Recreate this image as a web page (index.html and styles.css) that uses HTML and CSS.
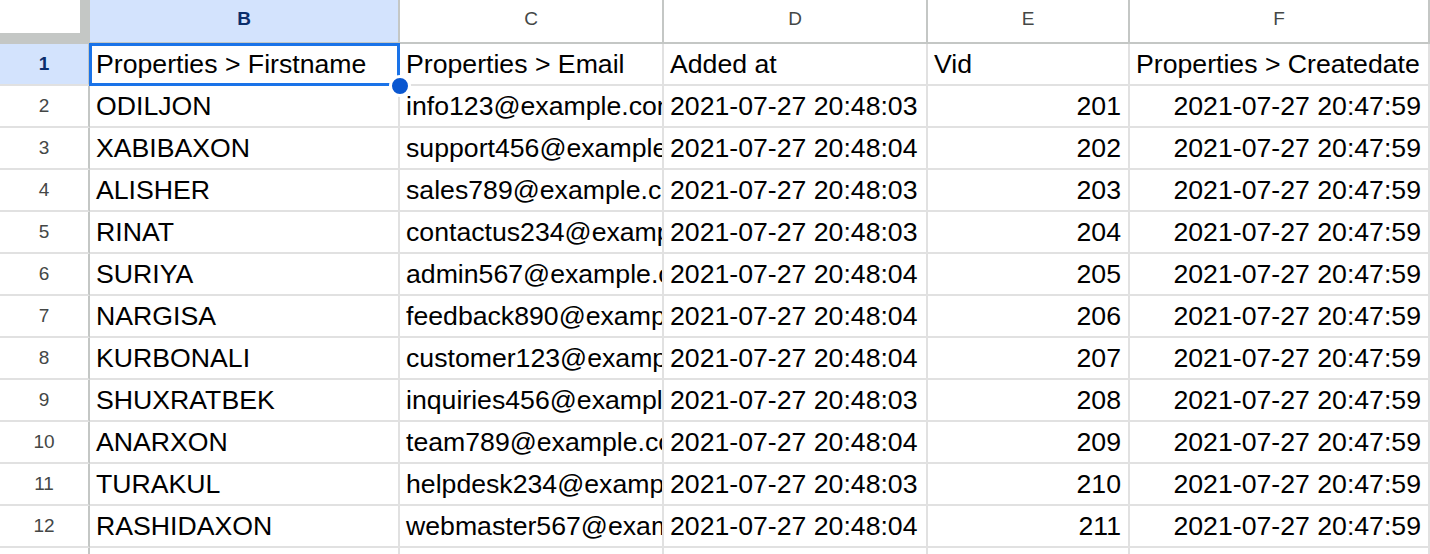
FILE: index.html
```html
<!DOCTYPE html>
<html lang="en">
<head>
<meta charset="utf-8">
<title>Sheet</title>
<link rel="stylesheet" href="styles.css">
</head>
<body>
<div class="sheet">
  <div class="grid">
    <div class="corner"><div class="corner-box"></div></div>
    <div class="colhead sel">B</div>
    <div class="colhead">C</div>
    <div class="colhead">D</div>
    <div class="colhead">E</div>
    <div class="colhead">F</div>

    <div class="rowhead sel">1</div>
    <div class="cell">Properties &gt; Firstname</div>
    <div class="cell">Properties &gt; Email</div>
    <div class="cell">Added at</div>
    <div class="cell">Vid</div>
    <div class="cell">Properties &gt; Createdate</div>

    <div class="rowhead">2</div>
    <div class="cell">ODILJON</div>
    <div class="cell">info123@example.com</div>
    <div class="cell">2021-07-27 20:48:03</div>
    <div class="cell num">201</div>
    <div class="cell num">2021-07-27 20:47:59</div>

    <div class="rowhead">3</div>
    <div class="cell">XABIBAXON</div>
    <div class="cell">support456@example.com</div>
    <div class="cell">2021-07-27 20:48:04</div>
    <div class="cell num">202</div>
    <div class="cell num">2021-07-27 20:47:59</div>

    <div class="rowhead">4</div>
    <div class="cell">ALISHER</div>
    <div class="cell">sales789@example.com</div>
    <div class="cell">2021-07-27 20:48:03</div>
    <div class="cell num">203</div>
    <div class="cell num">2021-07-27 20:47:59</div>

    <div class="rowhead">5</div>
    <div class="cell">RINAT</div>
    <div class="cell">contactus234@example.com</div>
    <div class="cell">2021-07-27 20:48:03</div>
    <div class="cell num">204</div>
    <div class="cell num">2021-07-27 20:47:59</div>

    <div class="rowhead">6</div>
    <div class="cell">SURIYA</div>
    <div class="cell">admin567@example.com</div>
    <div class="cell">2021-07-27 20:48:04</div>
    <div class="cell num">205</div>
    <div class="cell num">2021-07-27 20:47:59</div>

    <div class="rowhead">7</div>
    <div class="cell">NARGISA</div>
    <div class="cell">feedback890@example.com</div>
    <div class="cell">2021-07-27 20:48:04</div>
    <div class="cell num">206</div>
    <div class="cell num">2021-07-27 20:47:59</div>

    <div class="rowhead">8</div>
    <div class="cell">KURBONALI</div>
    <div class="cell">customer123@example.com</div>
    <div class="cell">2021-07-27 20:48:04</div>
    <div class="cell num">207</div>
    <div class="cell num">2021-07-27 20:47:59</div>

    <div class="rowhead">9</div>
    <div class="cell">SHUXRATBEK</div>
    <div class="cell">inquiries456@example.com</div>
    <div class="cell">2021-07-27 20:48:03</div>
    <div class="cell num">208</div>
    <div class="cell num">2021-07-27 20:47:59</div>

    <div class="rowhead">10</div>
    <div class="cell">ANARXON</div>
    <div class="cell">team789@example.com</div>
    <div class="cell">2021-07-27 20:48:04</div>
    <div class="cell num">209</div>
    <div class="cell num">2021-07-27 20:47:59</div>

    <div class="rowhead">11</div>
    <div class="cell">TURAKUL</div>
    <div class="cell">helpdesk234@example.com</div>
    <div class="cell">2021-07-27 20:48:03</div>
    <div class="cell num">210</div>
    <div class="cell num">2021-07-27 20:47:59</div>

    <div class="rowhead">12</div>
    <div class="cell">RASHIDAXON</div>
    <div class="cell">webmaster567@example.com</div>
    <div class="cell">2021-07-27 20:48:04</div>
    <div class="cell num">211</div>
    <div class="cell num">2021-07-27 20:47:59</div>

    <div class="rowhead">13</div>
    <div class="cell"></div>
    <div class="cell"></div>
    <div class="cell"></div>
    <div class="cell"></div>
    <div class="cell"></div>
  </div>
  <div class="selection"></div>
  <div class="fill-handle"></div>
</div>
</body>
</html>
```
FILE: styles.css
```css
* { box-sizing: border-box; }
html, body {
  margin: 0;
  padding: 0;
  background: #ffffff;
  overflow: hidden;
}
.sheet {
  position: relative;
  width: 1430px;
  height: 554px;
  overflow: hidden;
}
.grid {
  display: grid;
  grid-template-columns: 90px 310px 264px 264px 202px 300px;
  grid-auto-rows: 42px;
  grid-template-rows: 44px;
}
.corner {
  background: #c4c7c5;
  border-right: 2px solid #c4c7c5;
  border-bottom: 2px solid #c4c7c5;
}
.corner-box {
  width: 80px;
  height: 33px;
  background: #ffffff;
}
.colhead {
  display: flex;
  align-items: center;
  justify-content: center;
  padding-bottom: 4px;
  font-family: "Liberation Sans", Arial, sans-serif;
  font-size: 19px;
  color: #444746;
  background: #ffffff;
  border-right: 2px solid #c4c7c5;
  border-bottom: 2px solid #c4c7c5;
}
.colhead.sel {
  background: #d3e3fd;
  color: #0b2d6b;
  font-weight: 700;
}
.rowhead {
  display: flex;
  align-items: center;
  justify-content: center;
  font-family: "Liberation Sans", Arial, sans-serif;
  font-size: 19px;
  color: #444746;
  background: #ffffff;
  border-right: 2px solid #c4c7c5;
  border-bottom: 2px solid #e1e1e1;
}
.rowhead.sel {
  background: #d3e3fd;
  color: #0b2d6b;
  font-weight: 700;
}
.cell {
  display: flex;
  align-items: center;
  padding: 1px 6px 0 6px;
  font-family: "Liberation Sans", Arial, sans-serif;
  font-size: 26.67px;
  color: #000000;
  white-space: nowrap;
  overflow: hidden;
  border-right: 2px solid #e1e1e1;
  border-bottom: 2px solid #e1e1e1;
}
.cell.num {
  justify-content: flex-end;
  padding-right: 7px;
}
.selection {
  position: absolute;
  left: 89px;
  top: 43px;
  width: 311px;
  height: 43px;
  border: 3px solid #1a73e8;
  pointer-events: none;
}
.fill-handle {
  position: absolute;
  left: 389px;
  top: 75px;
  width: 22px;
  height: 22px;
  border-radius: 50%;
  background: #0b57d0;
  border: 3px solid #ffffff;
}
```
